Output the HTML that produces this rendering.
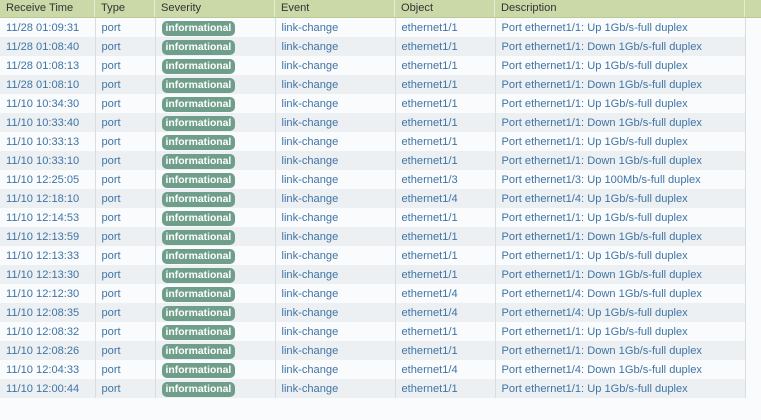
<!DOCTYPE html>
<html><head><style>
body{margin:0;width:761px;height:420px;background:#fafbfc;font-family:"Liberation Sans",Tahoma,sans-serif;font-size:11.1px;overflow:hidden}
.hdr{position:absolute;left:0;top:0;width:761px;height:17px;background:#cbd8a8;border-bottom:1px solid #b9c894}
.hdr div{position:absolute;top:0;height:17px;line-height:16px;color:#333;padding-left:6px;box-sizing:border-box;border-right:1px solid #e4ecd0}
table{position:absolute;left:0;top:18px;border-collapse:collapse;width:745px;table-layout:fixed}
td{height:19px;padding:0 0 0 6px;color:#3f74a5;border-right:1px solid #d8dde2;white-space:nowrap;overflow:hidden;vertical-align:middle}
tr:nth-child(odd){background:#fafbfc}
tr:nth-child(even){background:#edf0f3}
.b{display:inline-block;vertical-align:middle;background:#6f9e8a;color:#fff;border-radius:5px;height:15px;line-height:15px;padding:0 4px 0 4px;font-weight:bold;font-size:10.4px;margin-top:1px}
</style></head><body>
<div class="hdr">
<div style="left:0;width:95px">Receive Time</div>
<div style="left:95px;width:60px">Type</div>
<div style="left:155px;width:120px">Severity</div>
<div style="left:275px;width:120px">Event</div>
<div style="left:395px;width:100px">Object</div>
<div style="left:495px;width:250px">Description</div>
</div>
<table>
<colgroup><col style="width:95px"><col style="width:60px"><col style="width:120px"><col style="width:120px"><col style="width:100px"><col style="width:250px"></colgroup>
<tr><td>11/28 01:09:31</td><td>port</td><td><span class="b">informational</span></td><td>link-change</td><td>ethernet1/1</td><td>Port ethernet1/1: Up 1Gb/s-full duplex</td></tr>
<tr><td>11/28 01:08:40</td><td>port</td><td><span class="b">informational</span></td><td>link-change</td><td>ethernet1/1</td><td>Port ethernet1/1: Down 1Gb/s-full duplex</td></tr>
<tr><td>11/28 01:08:13</td><td>port</td><td><span class="b">informational</span></td><td>link-change</td><td>ethernet1/1</td><td>Port ethernet1/1: Up 1Gb/s-full duplex</td></tr>
<tr><td>11/28 01:08:10</td><td>port</td><td><span class="b">informational</span></td><td>link-change</td><td>ethernet1/1</td><td>Port ethernet1/1: Down 1Gb/s-full duplex</td></tr>
<tr><td>11/10 10:34:30</td><td>port</td><td><span class="b">informational</span></td><td>link-change</td><td>ethernet1/1</td><td>Port ethernet1/1: Up 1Gb/s-full duplex</td></tr>
<tr><td>11/10 10:33:40</td><td>port</td><td><span class="b">informational</span></td><td>link-change</td><td>ethernet1/1</td><td>Port ethernet1/1: Down 1Gb/s-full duplex</td></tr>
<tr><td>11/10 10:33:13</td><td>port</td><td><span class="b">informational</span></td><td>link-change</td><td>ethernet1/1</td><td>Port ethernet1/1: Up 1Gb/s-full duplex</td></tr>
<tr><td>11/10 10:33:10</td><td>port</td><td><span class="b">informational</span></td><td>link-change</td><td>ethernet1/1</td><td>Port ethernet1/1: Down 1Gb/s-full duplex</td></tr>
<tr><td>11/10 12:25:05</td><td>port</td><td><span class="b">informational</span></td><td>link-change</td><td>ethernet1/3</td><td>Port ethernet1/3: Up 100Mb/s-full duplex</td></tr>
<tr><td>11/10 12:18:10</td><td>port</td><td><span class="b">informational</span></td><td>link-change</td><td>ethernet1/4</td><td>Port ethernet1/4: Up 1Gb/s-full duplex</td></tr>
<tr><td>11/10 12:14:53</td><td>port</td><td><span class="b">informational</span></td><td>link-change</td><td>ethernet1/1</td><td>Port ethernet1/1: Up 1Gb/s-full duplex</td></tr>
<tr><td>11/10 12:13:59</td><td>port</td><td><span class="b">informational</span></td><td>link-change</td><td>ethernet1/1</td><td>Port ethernet1/1: Down 1Gb/s-full duplex</td></tr>
<tr><td>11/10 12:13:33</td><td>port</td><td><span class="b">informational</span></td><td>link-change</td><td>ethernet1/1</td><td>Port ethernet1/1: Up 1Gb/s-full duplex</td></tr>
<tr><td>11/10 12:13:30</td><td>port</td><td><span class="b">informational</span></td><td>link-change</td><td>ethernet1/1</td><td>Port ethernet1/1: Down 1Gb/s-full duplex</td></tr>
<tr><td>11/10 12:12:30</td><td>port</td><td><span class="b">informational</span></td><td>link-change</td><td>ethernet1/4</td><td>Port ethernet1/4: Down 1Gb/s-full duplex</td></tr>
<tr><td>11/10 12:08:35</td><td>port</td><td><span class="b">informational</span></td><td>link-change</td><td>ethernet1/4</td><td>Port ethernet1/4: Up 1Gb/s-full duplex</td></tr>
<tr><td>11/10 12:08:32</td><td>port</td><td><span class="b">informational</span></td><td>link-change</td><td>ethernet1/1</td><td>Port ethernet1/1: Up 1Gb/s-full duplex</td></tr>
<tr><td>11/10 12:08:26</td><td>port</td><td><span class="b">informational</span></td><td>link-change</td><td>ethernet1/1</td><td>Port ethernet1/1: Down 1Gb/s-full duplex</td></tr>
<tr><td>11/10 12:04:33</td><td>port</td><td><span class="b">informational</span></td><td>link-change</td><td>ethernet1/4</td><td>Port ethernet1/4: Down 1Gb/s-full duplex</td></tr>
<tr><td>11/10 12:00:44</td><td>port</td><td><span class="b">informational</span></td><td>link-change</td><td>ethernet1/1</td><td>Port ethernet1/1: Up 1Gb/s-full duplex</td></tr>
</table>
</body></html>
